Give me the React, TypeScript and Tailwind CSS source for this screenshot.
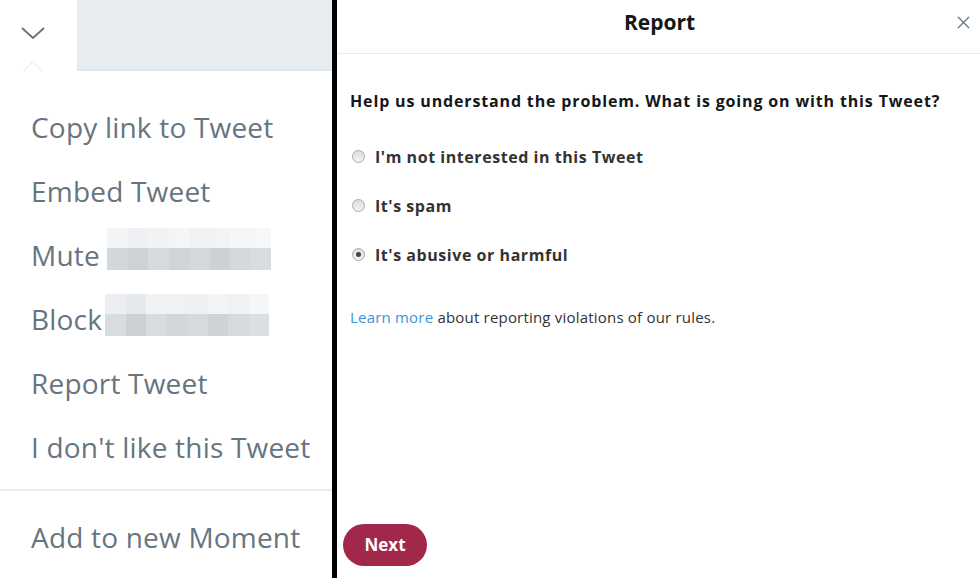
import { X } from 'lucide-react';

const muteCells = [
    ['#f3f4f6', '#eef0f3', '#f1f2f4', '#f4f5f6', '#eff1f3', '#f2f3f5', '#f5f6f7', '#f6f7f8'],
    ['#d3d7db', '#cdd2d6', '#d6dade', '#d0d4d8', '#d4d8dc', '#ccd1d5', '#d5d9dd', '#d9dce0'],
];

const blockCells = [
    ['#eceef1', '#e6e9ec', '#f1f2f4', '#f0f1f3', '#eef0f2', '#f3f4f6', '#f0f1f3', '#f5f6f7'],
    ['#d8dbdf', '#cdd1d6', '#d8dbdf', '#d3d7db', '#d6d9dd', '#cfd3d7', '#d6d9dd', '#dcdfe2'],
];

const Pixelated = ({ cells }: { cells: string[][] }) => (
    <div className="flex flex-col w-[164px]">
        {cells.map((row, r) => (
            <div key={r} className={`flex ${r === 0 ? 'h-[20px]' : 'h-[22px]'}`}>
                {row.map((c, i) => (
                    <div key={i} className="flex-1" style={{ backgroundColor: c }} />
                ))}
            </div>
        ))}
    </div>
);

const MenuItem = ({ label, labelWidth, children }: { label: string; labelWidth?: string; children?: React.ReactNode }) => (
    <div className="h-[64px] flex items-center pl-[31px]">
        <span className={`text-[28px] text-[#66757f] whitespace-nowrap tracking-[0.2px] ${labelWidth ?? ''}`}>{label}</span>
        {children}
    </div>
);

const Radio = ({ checked, label }: { checked?: boolean; label: string }) => (
    <div className="h-[49px] flex items-center">
        <span className="w-[13px] h-[13px] ml-[2px] rounded-full border border-[#a9a9a9] bg-gradient-to-b from-[#dcdcdc] to-[#f4f4f4] flex items-center justify-center">
            {checked && <span className="w-[5px] h-[5px] rounded-full bg-[#444]" />}
        </span>
        <span className="ml-[10px] text-[16px] font-bold text-[#333] tracking-[0.55px]">{label}</span>
    </div>
);

export default function App() {
    return (
        <div className="w-[980px] h-[578px] flex bg-white overflow-hidden" style={{ fontFamily: '"Open Sans", sans-serif' }}>
            {/* Left: tweet dropdown */}
            <div className="w-[332px] flex flex-col">
                <div className="h-[71px] flex">
                    <div className="w-[77px] relative">
                        <svg className="absolute left-[20px] top-[25px]" width="26" height="16" viewBox="0 0 26 16">
                            <path d="M2 3 L13 13 L24 3" fill="none" stroke="#657786" strokeWidth="2" />
                        </svg>
                        <div className="absolute left-[26px] top-[64px] w-[14px] h-[14px] rotate-45 bg-white border-l border-t border-[#e6ecf0]" />
                    </div>
                    <div className="flex-1 bg-[#e6ecf0] border-b border-[#dde3e8]" />
                </div>
                <div className="flex flex-col pt-[24px]">
                    <MenuItem label="Copy link to Tweet" />
                    <MenuItem label="Embed Tweet" />
                    <MenuItem label="Mute" labelWidth="w-[76px]">
                        <div className="-mt-[12px]">
                            <Pixelated cells={muteCells} />
                        </div>
                    </MenuItem>
                    <MenuItem label="Block" labelWidth="w-[74px]">
                        <div className="-mt-[8px]">
                            <Pixelated cells={blockCells} />
                        </div>
                    </MenuItem>
                    <MenuItem label="Report Tweet" />
                    <MenuItem label="I don't like this Tweet" />
                    <div className="mt-[10px] border-t-2 border-[#e6ecf0]" />
                    <div className="mt-[14px]">
                        <MenuItem label="Add to new Moment" />
                    </div>
                </div>
            </div>

            {/* Divider */}
            <div className="w-[5px] bg-black" />

            {/* Right: report dialog */}
            <div className="flex-1 flex flex-col">
                <div className="h-[54px] border-b border-[#e6ecf0] relative flex items-center justify-center">
                    <span className="text-[21px] font-bold text-[#14171a] ml-[2px] -mt-[8px]">Report</span>
                    <X className="absolute right-[6px] top-[12px] text-[#657786]" size={21} strokeWidth={1.5} />
                </div>
                <div className="pl-[13px] flex flex-col">
                    <p className="mt-[35px] text-[16px] font-bold text-[#14171a] tracking-[0.85px]">
                        Help us understand the problem. What is going on with this Tweet?
                    </p>
                    <div className="mt-[19px] flex flex-col">
                        <Radio label="I'm not interested in this Tweet" />
                        <Radio label="It's spam" />
                        <Radio checked label="It's abusive or harmful" />
                    </div>
                    <p className="mt-[27px] text-[15px] text-[#333] tracking-[0.2px]">
                        <span className="text-[#3b94d9]">Learn more</span> about reporting violations of our rules.
                    </p>
                </div>
                <div className="mt-auto mb-[12px] ml-[6px]">
                    <button className="w-[84px] h-[42px] rounded-full bg-[#a2284b] text-white text-[17px] font-bold">
                        Next
                    </button>
                </div>
            </div>
        </div>
    );
}
